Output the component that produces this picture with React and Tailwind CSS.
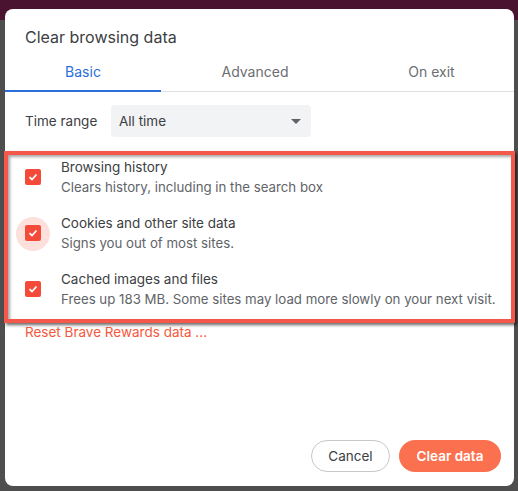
import React, { useState } from "react";

const rows = [
  { title: "Browsing history", sub: "Clears history, including in the search box" },
  { title: "Cookies and other site data", sub: "Signs you out of most sites.", focus: true },
  { title: "Cached images and files", sub: "Frees up 183 MB. Some sites may load more slowly on your next visit." },
];

const Check = ({ focus }) => (
  <div className="relative w-4 h-4 shrink-0">
    {focus && <div className="absolute -left-[9px] -top-[8px] w-[34px] h-[34px] rounded-full bg-[#fde0dc]" />}
    <div className="relative w-4 h-4 rounded-[2px] bg-[#f44a3a] flex items-center justify-center">
      <svg width="10" height="10" viewBox="0 0 10 10">
        <polyline points="1.5,5.2 4,7.5 8.5,2.5" fill="none" stroke="white" strokeWidth="1.8" />
      </svg>
    </div>
  </div>
);

const App = () => {
  const [tab, setTab] = useState(0);
  const tabs = [
    { label: "Basic", w: "w-[156px]" },
    { label: "Advanced", w: "w-[188px]" },
    { label: "On exit", w: "flex-1" },
  ];

  return (
    <div
      className="w-[518px] h-[491px] overflow-hidden pl-[5px] pt-[9px] bg-[linear-gradient(#4a1330_0,#4a1330_20px,#4e4e4e_20px)]"
      style={{ fontFamily: "Inter, 'Noto Sans', sans-serif" }}
    >
      <div className="w-[509px] h-[477px] bg-white rounded-lg flex flex-col">
        <h1 className="pt-4 px-5 text-[16px] leading-6 text-[#3c4043]">Clear browsing data</h1>

        <div className="flex border-b border-[#e0e0e0]">
          {tabs.map((t, i) => (
            <button
              key={t.label}
              onClick={() => setTab(i)}
              className={`${t.w} h-[43px] pt-1 -mb-px text-[14px] ${
                tab === i ? "text-[#2a6fdb] border-b-2 border-[#2a6fdb]" : "text-[#6b6e72] border-b-2 border-transparent"
              }`}
            >
              {t.label}
            </button>
          ))}
        </div>

        <div className="flex items-center mt-[13px] px-5 h-8">
          <span className="w-[86px] text-[13.5px] text-[#3c4043]">Time range</span>
          <div className="w-[200px] h-8 rounded bg-[#f1f3f4] flex items-center justify-between pl-2 pr-[10px]">
            <span className="text-[13.5px] text-[#3c4043]">All time</span>
            <svg width="10" height="5" viewBox="0 0 10 5">
              <polygon points="0,0 10,0 5,5" fill="#5f6368" />
            </svg>
          </div>
        </div>

        <div className="-ml-px w-[511px] mt-[14px] border-4 border-[#f4584a] shadow-[2px_2px_3px_rgba(0,0,0,0.6),inset_2px_2px_3px_rgba(0,0,0,0.35)] pt-[2px] pb-[10px] flex flex-col gap-4">
          {rows.map((r) => (
            <div key={r.title} className="h-10 flex items-center pl-[17px] gap-5">
              <Check focus={r.focus} />
              <div className="flex flex-col">
                <span className="text-[13.5px] leading-5 text-[#3c4043]">{r.title}</span>
                <span className="text-[13.25px] leading-5 text-[#616468]">{r.sub}</span>
              </div>
            </div>
          ))}
        </div>

        <a className="px-5 pt-px text-[13.5px] leading-4 text-[#f4583d] cursor-pointer">Reset Brave Rewards data ...</a>

        <div className="mt-auto flex justify-end gap-[9px] pr-[13px] pb-[14px]">
          <button className="w-[79px] h-8 rounded-full border border-[#c8c8c8] text-[13.5px] text-[#3c4043]">Cancel</button>
          <button className="w-[102px] h-8 rounded-full bg-[#fb7150] text-[13.5px] font-semibold text-white">Clear data</button>
        </div>
      </div>
    </div>
  );
};

export default App;
